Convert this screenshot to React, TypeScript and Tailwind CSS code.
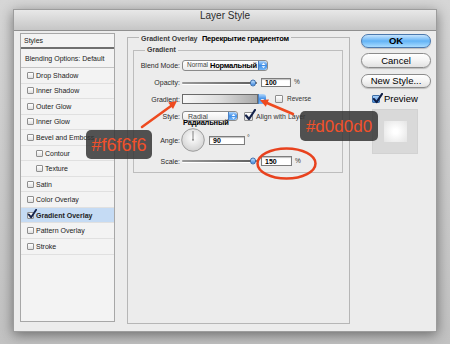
import React from "react";

const Check = ({ className = "", color = "#14224a" }: { className?: string; color?: string }) => (
  <svg viewBox="0 0 12 12" className={className}>
    <path d="M2 6.5 L5 10 L11 1" fill="none" stroke={color} strokeWidth="2.2" strokeLinecap="round" strokeLinejoin="round" />
  </svg>
);

const Box = ({ checked = false }: { checked?: boolean }) => (
  <span className="relative inline-block w-[7px] h-[7px] shrink-0 rounded-[1px] border border-[#8e8e8e] bg-gradient-to-b from-white to-[#e0e0e0]">
    {checked && <Check className="absolute -top-[4px] -left-[1px] w-[10px] h-[10px]" />}
  </span>
);

const Stepper = ({ single = false, w = "w-[9px]" }: { single?: boolean; w?: string }) => (
  <span className={`flex ${w} h-full shrink-0 items-center justify-center rounded-r-[3px] border-l border-[#4a7fc0] bg-gradient-to-b from-[#b3d8fb] via-[#3f8fe8] to-[#78b8f6]`}>
    <svg viewBox="0 0 8 10" className="w-[5px] h-[7px]">
      {!single && <path d="M1 4 L4 1 L7 4Z" fill="#fff" />}
      <path d={single ? "M1 4 L4 7.5 L7 4Z" : "M1 6 L4 9 L7 6Z"} fill="#fff" />
    </svg>
  </span>
);

const Slider = () => (
  <div className="relative w-[75px] h-full ml-[2px] flex items-center">
    <div className="w-full h-[2px] rounded-full bg-gradient-to-r from-[#9a9a9a] to-[#5f5f5f] shadow-[0_1px_0_#ffffff]" />
    <span className="absolute right-[1px] top-1/2 -translate-y-1/2 w-[6px] h-[7px] rounded-full border border-[#3a6fb0] bg-gradient-to-b from-[#c4e2fc] to-[#3a86dd]" />
  </div>
);

const Field = ({ value, w }: { value: string; w: string }) => (
  <div className={`${w} h-full ml-[4px] flex items-center pl-[3px] bg-white border border-[#7d7d7d] shadow-[inset_0_1px_1px_rgba(0,0,0,0.25)] text-[7px] font-bold leading-none text-black`}>
    {value}
  </div>
);

const Label = ({ children }: { children: React.ReactNode }) => (
  <span className="w-[46px] shrink-0 text-right text-[7px] leading-none text-[#2a2a2a]">{children}</span>
);

const styles = [
  { label: "Drop Shadow" },
  { label: "Inner Shadow" },
  { label: "Outer Glow" },
  { label: "Inner Glow" },
  { label: "Bevel and Emboss" },
  { label: "Contour", sub: true },
  { label: "Texture", sub: true },
  { label: "Satin" },
  { label: "Color Overlay" },
  { label: "Gradient Overlay", active: true },
  { label: "Pattern Overlay" },
  { label: "Stroke" },
];

const Button = ({ children, primary = false, className = "" }: { children: React.ReactNode; primary?: boolean; className?: string }) => (
  <div
    className={`flex items-center justify-center rounded-full border text-[9.5px] leading-none text-black shadow-[0_1px_1px_rgba(0,0,0,0.2)] ${
      primary
        ? "border-[#4b78ad] bg-gradient-to-b from-[#c6e4fd] via-[#62b3f5] to-[#a8dcff] font-bold"
        : "border-[#8b8b8b] bg-gradient-to-b from-white via-[#f4f4f4] to-[#e2e2e2]"
    } ${className}`}
  >
    {children}
  </div>
);

export default function App() {
  return (
    <div className="relative w-[450px] h-[344px] overflow-hidden bg-gradient-to-b from-[#d6d6d6] to-[#c2c2c2] pt-[9px] pl-[13px] [font-family:'Liberation_Sans',Arial,sans-serif]">
      <div className="w-[424px] h-[323px] flex flex-col bg-[#ececec] border border-[#9c9c9c] shadow-[0_3px_12px_rgba(0,0,0,0.45)]">
        <div className="h-[21px] shrink-0 flex items-start justify-center bg-gradient-to-b from-[#e8e8e8] to-[#c6c6c6] border-b border-[#8f8f8f] text-[10px] leading-[12px] text-[#2c2c2c]">
          Layer Style
        </div>

        <div className="flex items-start">
          {/* styles list */}
          <div className="ml-[6px] mt-[2px] w-[95px] h-[289px] flex flex-col border border-[#a7a7a7] bg-[#f3f3f3] text-[7px] leading-none text-[#222]">
            <div className="h-[15px] shrink-0 flex items-center pl-[3px] border-b-2 border-[#6f6f6f]">Styles</div>
            <div className="h-[19px] shrink-0 flex items-center pl-[4px] border-b border-[#c4c4c4]">Blending Options: Default</div>
            {styles.map((s) => (
              <div
                key={s.label}
                className={`h-[15.55px] shrink-0 flex items-center gap-[2px] border-b border-[#e0e0e0] ${s.sub ? "pl-[15px]" : "pl-[6px]"} ${
                  s.active ? "bg-[#c5dbf4] font-bold" : ""
                }`}
              >
                <Box checked={s.active} />
                <span>{s.label}</span>
              </div>
            ))}
          </div>

          {/* main group */}
          <fieldset className="ml-[12px] w-[223px] h-[293px] min-w-0 shrink-0 border border-[#b6b6b6] p-0">
            <legend className="ml-[11px] px-[2px] leading-[10px] whitespace-nowrap">
              <span className="text-[7px] font-bold text-[#3a3a3a]">Gradient Overlay</span>{" "}
              <span className="text-[7.5px] font-bold tracking-[-0.2px] text-black">Перекрытие градиентом</span>
            </legend>

            <fieldset className="ml-[5px] mt-[1px] w-[210px] min-w-0 border border-[#bdbdbd] p-0 pb-[6px]">
              <legend className="ml-[11px] px-[2px] leading-[10px] text-[7px] font-bold text-[#3a3a3a]">Gradient</legend>

              <div className="flex items-center h-[11px] mt-[5px]">
                <Label>Blend Mode:</Label>
                <div className="flex w-[86px] h-full ml-[2px] overflow-hidden rounded-[3px] border border-[#8a8a8a] bg-gradient-to-b from-white to-[#ececec]">
                  <span className="flex flex-1 items-center gap-[2px] pl-[4px] leading-none whitespace-nowrap">
                    <span className="text-[6.5px] text-[#444]">Normal</span>
                    <span className="text-[7.5px] font-bold tracking-[-0.2px] text-black">Нормальный</span>
                  </span>
                  <Stepper />
                </div>
              </div>

              <div className="flex items-center h-[9px] mt-[7px]">
                <Label>Opacity:</Label>
                <Slider />
                <Field value="100" w="w-[30px]" />
                <span className="ml-[3px] text-[6.5px] leading-none text-[#333]">%</span>
              </div>

              <div className="flex items-center h-[10px] mt-[7px]">
                <Label>Gradient:</Label>
                <div className="flex h-full ml-[2px]">
                  <div className="w-[76px] h-full border border-[#6a6a6a] bg-gradient-to-r from-[#f8f8f8] via-[#dcdcdc] to-[#a9a9a9]" />
                  <Stepper single w="w-[8px]" />
                </div>
                <span className="ml-[9px] w-[8px] h-[8px] rounded-[1px] border border-[#8e8e8e] bg-gradient-to-b from-white to-[#e0e0e0]" />
                <span className="ml-[4px] text-[6.5px] leading-none text-[#333]">Reverse</span>
              </div>

              <div className="flex items-center h-[10px] mt-[7px]">
                <Label>Style:</Label>
                <div className="flex w-[56px] h-full ml-[2px] overflow-hidden rounded-[3px] border border-[#8a8a8a] bg-gradient-to-b from-white to-[#ececec]">
                  <span className="flex flex-1 items-center pl-[5px] text-[7px] leading-none text-[#444]">Radial</span>
                  <Stepper />
                </div>
                <span className="relative ml-[6px] w-[9px] h-[9px] rounded-[1px] border border-[#8e8e8e] bg-gradient-to-b from-white to-[#e0e0e0]">
                  <Check className="absolute -top-[4px] -left-[1px] w-[12px] h-[12px]" />
                </span>
                <span className="ml-[3px] text-[7px] leading-none text-[#333]">Align with Layer</span>
              </div>

              <div className="h-[8px] -mt-[2px] pl-[49px] text-[7.5px] font-bold leading-[8px] tracking-[-0.2px] text-black">Радиальный</div>

              <div className="flex items-center h-[24px] mt-[1px]">
                <Label>Angle:</Label>
                <svg viewBox="0 0 24 24" className="w-[24px] h-[24px] ml-[1px]">
                  <defs>
                    <radialGradient id="dial" cx="50%" cy="40%" r="60%">
                      <stop offset="0" stopColor="#ffffff" />
                      <stop offset="1" stopColor="#d2d2d2" />
                    </radialGradient>
                  </defs>
                  <circle cx="12" cy="12" r="11.3" fill="url(#dial)" stroke="#8c8c8c" strokeWidth="0.8" />
                  <line x1="12" y1="12" x2="12" y2="3" stroke="#666" strokeWidth="0.8" />
                  <circle cx="12" cy="12" r="0.8" fill="#666" />
                </svg>
                <div className="h-[9px] flex">
                  <Field value="90" w="w-[36px]" />
                </div>
                <span className="self-start mt-[6px] ml-[2px] text-[7px] leading-none text-[#333]">°</span>
              </div>

              <div className="flex items-center h-[10px] mt-[4px]">
                <Label>Scale:</Label>
                <Slider />
                <Field value="150" w="w-[31px]" />
                <span className="ml-[3px] text-[6.5px] leading-none text-[#333]">%</span>
              </div>
            </fieldset>
          </fieldset>

          {/* buttons */}
          <div className="ml-[11px] mt-[3px] w-[70px] flex flex-col">
            <Button primary className="h-[14px]">OK</Button>
            <Button className="h-[15px] mt-[5px]">Cancel</Button>
            <Button className="h-[14px] mt-[6px]">New Style...</Button>
            <div className="mt-[7px] h-[8px] pl-[11px] flex items-center">
              <span className="relative w-[8px] h-[8px] rounded-[1px] border border-[#3f6fa8] bg-gradient-to-b from-[#a9d0f7] to-[#4b8fe0]">
                <Check className="absolute -top-[3px] -left-[1px] w-[11px] h-[11px]" color="#0e1d44" />
              </span>
              <span className="ml-[4px] text-[9.5px] leading-none text-black">Preview</span>
            </div>
            <div className="mt-[6px] ml-[11px] w-[46px] h-[45px] flex items-center justify-center border border-[#d2d2d2] bg-[#d9d9d9]">
              <div className="w-[23px] h-[21px] bg-[radial-gradient(circle,#ffffff_15%,#e4e4e4_100%)]" />
            </div>
          </div>
        </div>
      </div>

      {/* annotations */}
      <svg className="absolute left-0 top-0 w-[450px] h-[344px] pointer-events-none" viewBox="0 0 450 344">
        <line x1="142" y1="127" x2="171" y2="106" stroke="#ee4a1f" strokeWidth="2.5" strokeLinecap="round" />
        <polygon points="177,101 173,109 168.2,102.6" fill="#ee4a1f" />
        <line x1="293" y1="114" x2="267" y2="103" stroke="#ee4a1f" strokeWidth="2.5" strokeLinecap="round" />
        <polygon points="260,100 269,99.4 265.8,106.8" fill="#ee4a1f" />
        <ellipse cx="286.5" cy="163.5" rx="29" ry="15" fill="none" stroke="#e8421e" strokeWidth="2.5" />
      </svg>
      <div className="absolute left-[86px] top-[130px] w-[66px] h-[29px] flex items-center justify-center rounded-[5px] bg-[#353535]/85 text-[18px] leading-none text-[#f2502a]">
        #f6f6f6
      </div>
      <div className="absolute left-[300px] top-[111px] w-[78px] h-[30px] flex items-center justify-center rounded-[5px] bg-[#353535]/85 text-[17px] leading-none text-[#f2502a]">
        #d0d0d0
      </div>
    </div>
  );
}
